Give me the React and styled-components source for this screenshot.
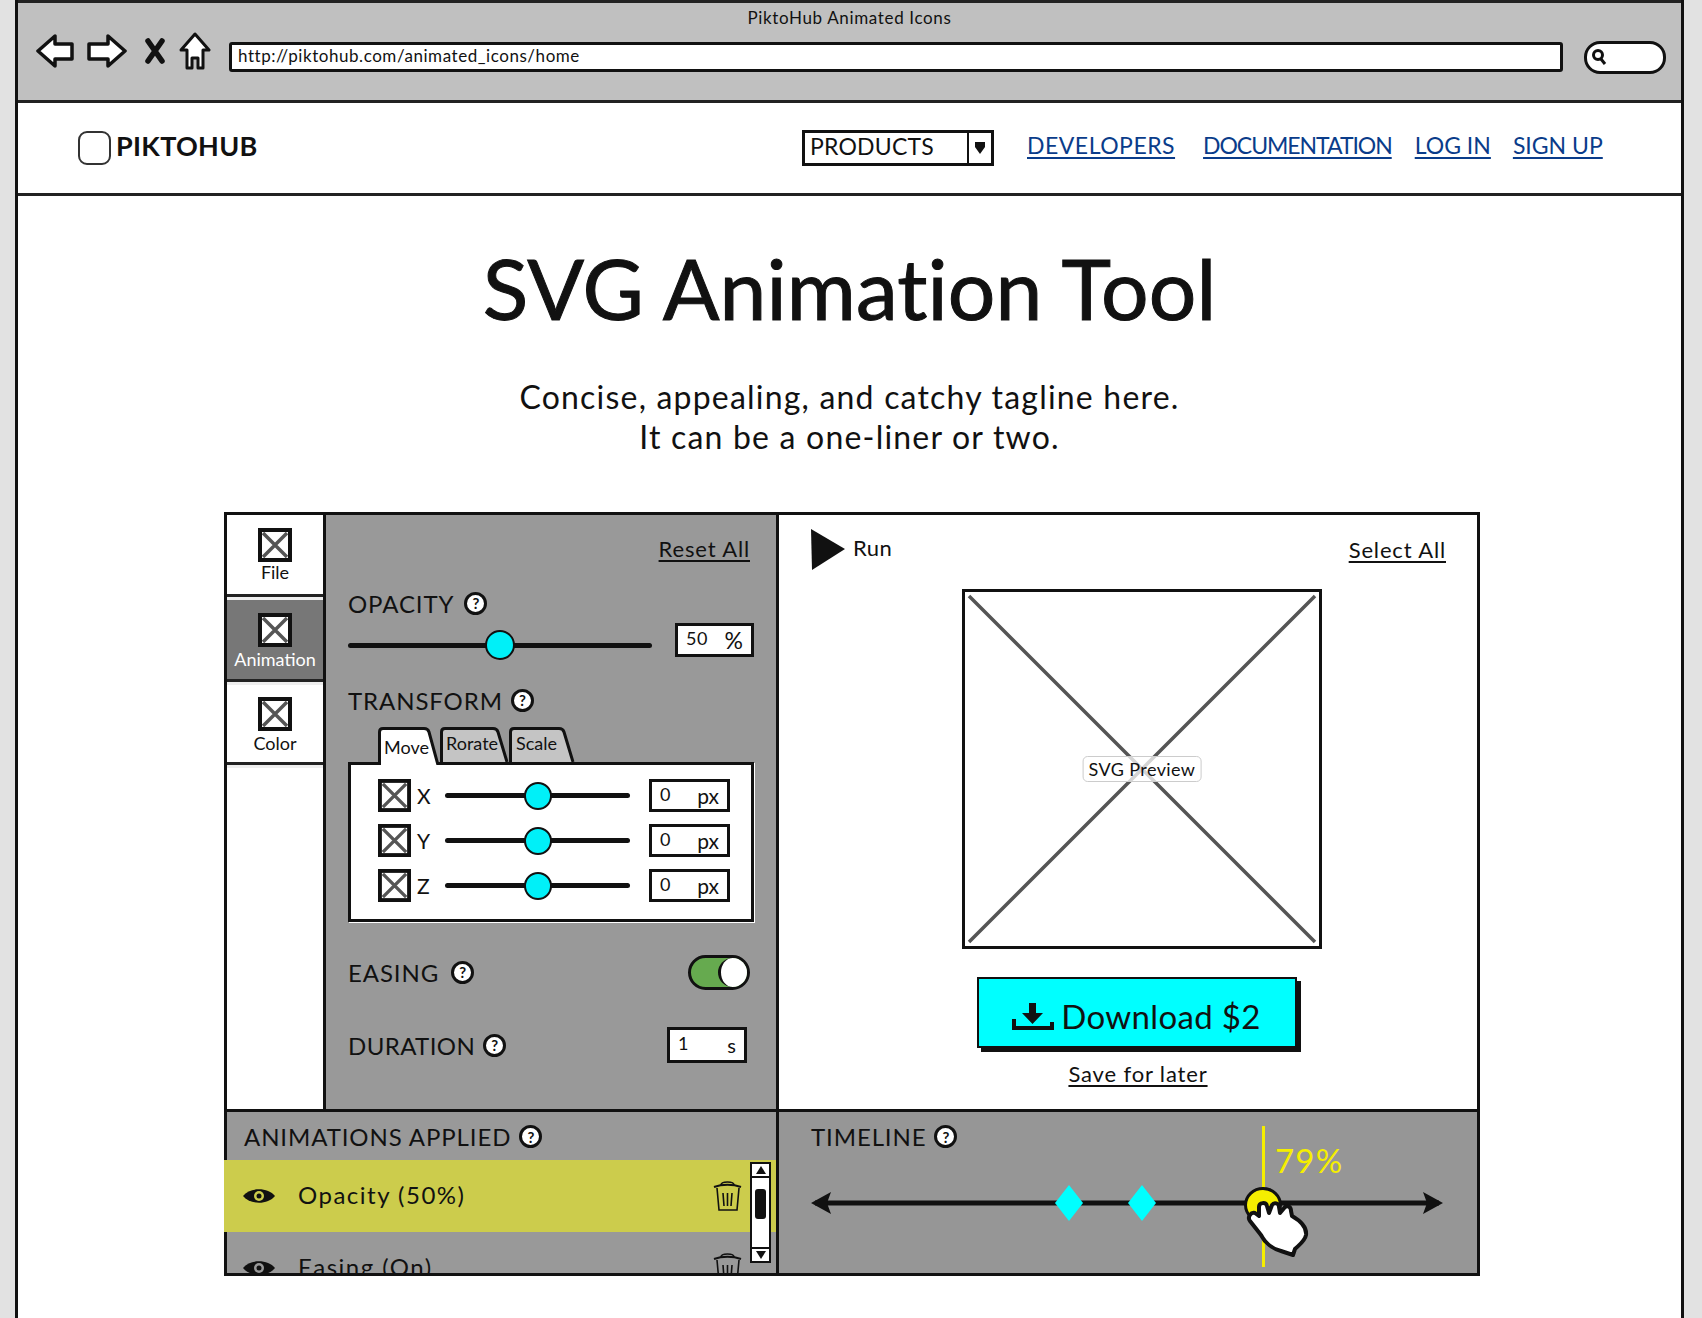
import styled, { createGlobalStyle } from "styled-components"

const GlobalStyle = createGlobalStyle`
    html, body {
        margin: 0;
        padding: 0;
        background: #e2e2e2;
    }
    * {
        box-sizing: border-box;
    }
    body {
        font-family: "Lato", "Noto Sans", sans-serif;
        color: #111;
    }
`

const Page = styled.div`
    width: 1702px;
    height: 1318px;
    overflow: hidden;
    padding-left: 15px;
`

const BrowserWindow = styled.div`
    width: 1669px;
    height: 1318px;
    background: #fff;
    border-left: 3px solid #111;
    border-right: 3px solid #111;
`

const BrowserBar = styled.header`
    height: 103px;
    background: #c0c0c0;
    border-top: 3px solid #222;
    border-bottom: 3px solid #222;
`

const BrowserTitle = styled.div`
    height: 30px;
    line-height: 30px;
    text-align: center;
    font-size: 17px;
    letter-spacing: 0.65px;
`

const BrowserTools = styled.div`
    display: flex;
    align-items: center;
    height: 48px;
    padding-left: 18px;
`

const ToolIcon = styled.svg`
    flex: none;
    margin-right: ${({ $gap }) => $gap}px;
    margin-bottom: 12px;
`

const UrlBar = styled.div`
    flex: none;
    width: 1334px;
    height: 30px;
    margin-right: 21px;
    padding-left: 6px;
    background: #fff;
    border: 3px solid #111;
    border-radius: 3px;
    font-size: 17px;
    line-height: 22px;
    letter-spacing: 0.55px;
`

const SearchPill = styled.div`
    flex: none;
    display: flex;
    align-items: center;
    width: 82px;
    height: 33px;
    padding-left: 4px;
    background: #fff;
    border: 3px solid #111;
    border-radius: 16px;
`

const SiteNav = styled.nav`
    display: flex;
    align-items: center;
    height: 93px;
    padding: 0 0 4px 60px;
    border-bottom: 3px solid #222;
`

const Logo = styled.div`
    display: flex;
    align-items: center;
    gap: 5px;
    width: 724px;
    font-size: 27px;
    line-height: 30px;
    font-weight: 700;
    letter-spacing: 0.3px;
`

const LogoMark = styled.span`
    width: 33px;
    height: 34px;
    margin-top: 4px;
    border: 2px solid #333;
    border-radius: 9px;
`

const ProductSelect = styled.div`
    display: flex;
    width: 192px;
    height: 36px;
    margin: 3px 33px 0 0;
    border: 3px solid #111;
    font-size: 23px;
    line-height: 26px;
`

const SelectLabel = styled.span`
    flex: 1;
    padding-left: 5px;
    letter-spacing: 0.2px;
`

const SelectArrow = styled.span`
    display: flex;
    align-items: center;
    justify-content: center;
    width: 24px;
    border-left: 2px solid #111;
`

const NavLink = styled.a`
    margin-right: ${({ $gap }) => $gap}px;
    color: #0a3c8a;
    font-size: 23px;
    text-decoration: underline;
    text-decoration-thickness: 2px;
    text-underline-offset: 3px;
    letter-spacing: ${({ $spacing }) => $spacing}px;
    position: relative;
    top: -1px;
`

const Hero = styled.section`
    padding-top: 47px;
    text-align: center;
`

const HeroTitle = styled.h1`
    margin: 0;
    font-size: 84px;
    line-height: 90px;
    font-weight: 400;
    -webkit-text-stroke: 1px #111;
    letter-spacing: 0.1px;
`

const Tagline = styled.p`
    margin: 44px 0 0;
    font-size: 32px;
    line-height: 40px;
    letter-spacing: 1.2px;
`

const Tool = styled.section`
    display: grid;
    grid-template-columns: 99px 453px 704px;
    grid-template-rows: 597px 167px;
    width: 1256px;
    margin: 55px 0 0 206px;
`

const Sidebar = styled.aside`
    border: 3px solid #111;
    border-right: 0;
    border-bottom: 0;
    background: #fff;
`

const SideTab = styled.div`
    display: flex;
    flex-direction: column;
    align-items: center;
    height: ${({ $height }) => $height}px;
    margin-bottom: 3px;
    padding-top: ${({ $top }) => $top}px;
    background: ${({ $active }) => ($active ? "#777" : "#fff")};
    color: ${({ $active }) => ($active ? "#fff" : "#111")};
    border-bottom: 3px solid #222;
    box-shadow: 0 3px 0 #eee;
    font-size: 18px;
    line-height: 22px;
`

const SideLabel = styled.span`
    margin-top: ${({ $gap }) => $gap}px;
`

const SideIcon = styled.svg`
    display: block;
    flex: none;
    background: #fff;
`

const OptionsPanel = styled.div`
    padding: 24px 22px 0;
    background: #999;
    border-top: 3px solid #111;
    border-left: 3px solid #111;
`

const SketchLink = styled.a`
    color: inherit;
    font-size: ${({ $size }) => $size || 22}px;
    line-height: 26px;
    text-decoration: underline;
    text-decoration-thickness: 2px;
    text-underline-offset: 3px;
    letter-spacing: 0.85px;
`

const ResetRow = styled.div`
    display: flex;
    justify-content: flex-end;
    height: 26px;
    padding-right: 4px;
    margin-top: -3px;
`

const FieldLabel = styled.div`
    display: flex;
    align-items: center;
    gap: ${({ $gap }) => $gap ?? 8}px;
    height: 30px;
    margin-top: ${({ $top }) => $top}px;
    font-size: 24px;
    letter-spacing: ${({ $spacing }) => $spacing ?? 0.9}px;
`

const Help = styled.span`
    display: inline-flex;
    align-items: center;
    justify-content: center;
    width: 23px;
    height: 23px;
    background: #fff;
    border: 3px solid #111;
    border-radius: 50%;
    font-size: 15px;
    font-weight: 700;
    letter-spacing: 0;
`

const SliderRow = styled.div`
    display: flex;
    align-items: center;
    justify-content: space-between;
    height: 34px;
    margin-top: 5px;
`

const SliderTrack = styled.div`
    position: relative;
    flex: none;
    width: ${({ $width }) => $width}px;
    height: 5px;
    margin-top: ${({ $drop }) => $drop || 0}px;
    background: #111;
    border-radius: 3px;
`

const SliderThumb = styled.span`
    position: absolute;
    top: 50%;
    width: ${({ $size }) => $size}px;
    height: ${({ $size }) => $size}px;
    transform: translate(-50%, -50%);
    background: #00f0f8;
    border: 2px solid #111;
    border-radius: 50%;
`

const ValueBox = styled.div`
    display: flex;
    flex: none;
    align-items: center;
    justify-content: space-between;
    width: ${({ $width }) => $width}px;
    height: ${({ $height }) => $height || 34}px;
    margin-left: ${({ $left }) => $left || 0}px;
    padding: 0 8px;
    background: #fff;
    border: 3px solid #111;
    font-size: 18px;
`

const ValueNumber = styled.span`
    position: relative;
    top: -2px;
    letter-spacing: 0.6px;
`

const ValueUnit = styled.span`
    font-size: ${({ $size }) => $size}px;
`

const TabStrip = styled.div`
    display: flex;
    height: 35px;
    margin-top: 12px;
    padding-left: 30px;
    position: relative;
    z-index: 1;
`

const TransformTab = styled.div`
    position: relative;
    flex: none;
    width: ${({ $width }) => $width}px;
    height: ${({ $active }) => ($active ? 38 : 35)}px;
    padding: ${({ $active }) => ($active ? 9 : 5)}px 0 0 ${({ $pad }) => $pad}px;
    font-size: 18px;
    line-height: 22px;
`

const TabShape = styled.svg`
    position: absolute;
    top: 0;
    left: 0;
`

const TabLabel = styled.span`
    position: relative;
`

const TabBody = styled.div`
    display: flex;
    flex-direction: column;
    gap: 12px;
    height: 160px;
    padding: 14px 21px 0 27px;
    background: #fff;
    border: 3px solid #111;
    box-shadow: 1px 1px 0 #fff;
`

const AxisRow = styled.div`
    display: flex;
    align-items: center;
    height: 33px;
`

const AxisLabel = styled.span`
    flex: none;
    width: 34px;
    padding-left: 6px;
    font-size: 21px;
`

const SwitchRow = styled.div`
    display: flex;
    align-items: center;
    justify-content: space-between;
    height: 36px;
    margin-top: ${({ $top }) => $top}px;
    padding-right: ${({ $right }) => $right}px;
`

const RowLabel = styled(FieldLabel)`
    margin-top: 0;
`

const Toggle = styled.div`
    display: flex;
    justify-content: flex-end;
    width: 62px;
    height: 35px;
    background: #66aa4f;
    border: 3px solid #111;
    border-radius: 18px;
`

const ToggleKnob = styled.span`
    width: 29px;
    height: 29px;
    background: #fff;
    border-left: 3px solid #111;
    border-radius: 50%;
`

const PreviewPanel = styled.div`
    display: flex;
    flex-direction: column;
    background: #fff;
    border-top: 3px solid #111;
    border-left: 3px solid #111;
    border-right: 3px solid #111;
`

const PreviewHead = styled.div`
    display: flex;
    align-items: center;
    height: 41px;
    margin-top: 14px;
    padding: 0 31px 0 32px;
`

const RunLabel = styled.span`
    flex: 1;
    margin-left: 8px;
    font-size: 22px;
    position: relative;
    top: -2px;
    letter-spacing: 0.5px;
`

const PreviewColumn = styled.div`
    display: flex;
    flex-direction: column;
    align-items: center;
    width: 360px;
    margin: 19px 0 0 183px;
`

const PreviewBox = styled.div`
    position: relative;
    width: 360px;
    height: 360px;
    border: 3px solid #111;
`

const PreviewLines = styled.svg`
    display: block;
    width: 100%;
    height: 100%;
`

const PreviewCaption = styled.span`
    position: absolute;
    top: 50%;
    left: 50%;
    transform: translate(-50%, -50%);
    padding: 1px 5px;
    background: rgba(255, 255, 255, 0.75);
    border: 1px solid #ccc;
    border-radius: 5px;
    font-size: 18px;
    line-height: 22px;
    white-space: nowrap;
    letter-spacing: 0.4px;
`

const DownloadButton = styled.div`
    display: flex;
    align-items: center;
    justify-content: center;
    gap: 7px;
    flex: none;
    width: 320px;
    height: 71px;
    margin: 28px 0 0 -11px;
    padding-top: 6px;
    background: #00ffff;
    border: 2px solid #111;
    box-shadow: 4px 4px 0 #111;
    font-size: 33px;
    letter-spacing: 0.35px;
`

const SaveRow = styled.div`
    margin: 13px 0 0 -8px;
    height: 30px;
`

const AppliedPanel = styled.div`
    grid-column: 1 / span 2;
    position: relative;
    overflow: hidden;
    background: #999;
    border-top: 3px solid #111;
    border-bottom: 3px solid #111;
`

const PanelHeading = styled(FieldLabel)`
    margin: 0;
    height: ${({ $height }) => $height}px;
    padding: 1px 0 0 ${({ $left }) => $left}px;
    gap: 8px;
`

const AppliedHeading = styled(PanelHeading)`
    border-left: 3px solid #111;
`

const AppliedRow = styled.div`
    display: flex;
    align-items: center;
    height: 72px;
    padding: 0 34px 0 ${({ $active }) => ($active ? 18 : 15)}px;
    background: ${({ $active }) => ($active ? "#cccc4c" : "transparent")};
    border-left: ${({ $active }) => ($active ? "0" : "3px solid #111")};
    font-size: 24px;
    letter-spacing: 1.5px;
`

const AppliedName = styled.span`
    flex: 1;
    margin: -4px 0 0 22px;
`

const ScrollBar = styled.div`
    position: absolute;
    top: 50px;
    right: 5px;
    display: flex;
    flex-direction: column;
    justify-content: space-between;
    width: 21px;
    height: 101px;
    background: #fff;
    border: 2px solid #111;
`

const ScrollStep = styled.span`
    display: flex;
    align-items: center;
    justify-content: center;
    height: 14px;
    border-${({ $side }) => $side}: 2px solid #111;
`

const ScrollThumb = styled.span`
    width: 11px;
    height: 30px;
    margin: -18px auto 0;
    background: #111;
    border-radius: 3px;
`

const TimelinePanel = styled.div`
    position: relative;
    overflow: hidden;
    background: #969696;
    border: 3px solid #111;
`

const TimelineTrack = styled.div`
    position: absolute;
    top: 91px;
    left: 32px;
    width: 632px;
    height: 0;
`

const TrackArrows = styled.svg`
    position: absolute;
    top: -14px;
    left: 0;
`

const Diamond = styled.span`
    position: absolute;
    top: -18px;
    width: 28px;
    height: 36px;
    margin-left: -14px;
    background: #00ffff;
    clip-path: polygon(50% 0, 100% 50%, 50% 100%, 0 50%);
`

const Playhead = styled.span`
    position: absolute;
    top: 14px;
    left: 483px;
    width: 3px;
    height: 141px;
    background: #f5ee00;
`

const PlayKnob = styled.span`
    position: absolute;
    top: 75px;
    left: 465px;
    width: 38px;
    height: 36px;
    background: #f5ee00;
    border: 3px solid #111;
    border-radius: 50%;
`

const PlayValue = styled.span`
    position: absolute;
    top: 28px;
    left: 496px;
    color: #f5ee00;
    font-size: 33px;
    line-height: 40px;
    letter-spacing: 1.2px;
`

const HandCursor = styled.svg`
    position: absolute;
    top: 87px;
    left: 466px;
`

function XIcon({ size = 34 }) {
    return (
        <SideIcon width={size} height={size} viewBox="0 0 34 34">
            <rect x="2" y="2" width="30" height="30" fill="#fff" stroke="#111" strokeWidth="4" />
            <path d="M5 5 29 29 M29 5 5 29" stroke="#555" strokeWidth="3.5" fill="none" />
        </SideIcon>
    )
}

function Slider({ value, width, size, drop }) {
    return (
        <SliderTrack $width={width} $drop={drop}>
            <SliderThumb $size={size} style={{ left: `${value}%` }} />
        </SliderTrack>
    )
}

function EyeIcon({ pupil }) {
    return (
        <svg width="34" height="20" viewBox="0 0 34 20" style={{ flex: "none" }}>
            <path d="M1 10C8 1 26 1 33 10 26 19 8 19 1 10Z" fill="#111" />
            <circle cx="17" cy="10" r="5" fill={pupil} />
            <circle cx="17" cy="10" r="2.5" fill="#111" />
        </svg>
    )
}

function TrashIcon() {
    return (
        <svg width="29" height="32" viewBox="0 0 29 32" fill="none" stroke="#111" strokeWidth="1.6" style={{ flex: "none" }}>
            <path d="M1 7C9 4 20 4 28 7" strokeWidth="2" />
            <path d="M8 5C8 1 21 1 21 5" />
            <path d="M4 8 6 30H24L26 8" />
            <path d="M10 13 11 26M14.5 13V26M19 13 18 26" />
        </svg>
    )
}

function SketchTab({ label, width, pad, active }) {
    const height = active ? 38 : 35
    const outline = `M1.500 ${height}V5Q1.500 1.500 5 1.500H${width - 16}Q${width - 12} 1.500 ${width - 11} 5L${width - 2} ${height}`
    return (
        <TransformTab $width={width} $pad={pad} $active={active}>
            <TabShape width={width} height={height} viewBox={`0 0 ${width} ${height}`}>
                <path d={outline} fill={active ? "#fff" : "#c4c4c4"} stroke="#111" strokeWidth="3" />
            </TabShape>
            <TabLabel>{label}</TabLabel>
        </TransformTab>
    )
}

const axes = ["X", "Y", "Z"]
const nav = [
    { label: "DEVELOPERS", gap: 28, spacing: 0.5 },
    { label: "DOCUMENTATION", gap: 23, spacing: -1.05 },
    { label: "LOG IN", gap: 22, spacing: 0 },
    { label: "SIGN UP", gap: 0, spacing: 0 },
]

export default function App() {
    return (
        <>
            <GlobalStyle />
            <Page>
                <BrowserWindow>
                    <BrowserBar>
                        <BrowserTitle>PiktoHub Animated Icons</BrowserTitle>
                        <BrowserTools>
                            <ToolIcon $gap={13} width="38" height="36" viewBox="0 0 38 36">
                                <path d="M2 18 19 3V11H36V26H19V33Z" fill="#fff" stroke="#111" strokeWidth="3.5" strokeLinejoin="round" />
                            </ToolIcon>
                            <ToolIcon $gap={17} width="40" height="36" viewBox="0 0 40 36">
                                <path d="M38 18 21 3V11H2V26H21V33Z" fill="#fff" stroke="#111" strokeWidth="3.5" strokeLinejoin="round" />
                            </ToolIcon>
                            <ToolIcon $gap={13} width="22" height="28" viewBox="0 0 22 28">
                                <path d="M4 4 18 24M18 4 4 24" stroke="#111" strokeWidth="5.500" strokeLinecap="round" />
                            </ToolIcon>
                            <ToolIcon $gap={18} width="32" height="38" viewBox="0 0 32 38">
                                <path d="M16 2 30 18H24V36H19V26H13V36H8V18H2Z" fill="#fff" stroke="#111" strokeWidth="3" strokeLinejoin="round" />
                            </ToolIcon>
                            <UrlBar>http://piktohub.com/animated_icons/home</UrlBar>
                            <SearchPill>
                                <svg width="16" height="18" viewBox="0 0 16 18" fill="none" stroke="#111">
                                    <circle cx="7" cy="7" r="4.5" strokeWidth="3" />
                                    <path d="M10 11 14 16" strokeWidth="3" />
                                </svg>
                            </SearchPill>
                        </BrowserTools>
                    </BrowserBar>

                    <SiteNav>
                        <Logo>
                            <LogoMark />
                            PIKTOHUB
                        </Logo>
                        <ProductSelect>
                            <SelectLabel>PRODUCTS</SelectLabel>
                            <SelectArrow>
                                <svg width="12" height="14" viewBox="0 0 12 14">
                                    <path d="M1 1H11V6L6 13 1 6Z" fill="#111" />
                                </svg>
                            </SelectArrow>
                        </ProductSelect>
                        {nav.map((link) => (
                            <NavLink key={link.label} $gap={link.gap} $spacing={link.spacing}>
                                {link.label}
                            </NavLink>
                        ))}
                    </SiteNav>

                    <Hero>
                        <HeroTitle>SVG Animation Tool</HeroTitle>
                        <Tagline>
                            Concise, appealing, and catchy tagline here.
                            <br />
                            It can be a one-liner or two.
                        </Tagline>
                    </Hero>

                    <Tool>
                        <Sidebar>
                            <SideTab $height={82} $top={13}>
                                <XIcon />
                                <SideLabel $gap={-1}>File</SideLabel>
                            </SideTab>
                            <SideTab $height={82} $top={13} $active>
                                <XIcon />
                                <SideLabel $gap={1}>Animation</SideLabel>
                            </SideTab>
                            <SideTab $height={80} $top={12}>
                                <XIcon />
                                <SideLabel $gap={1}>Color</SideLabel>
                            </SideTab>
                        </Sidebar>

                        <OptionsPanel>
                            <ResetRow>
                                <SketchLink>Reset All</SketchLink>
                            </ResetRow>
                            <FieldLabel $top={26} $gap={10}>
                                OPACITY <Help>?</Help>
                            </FieldLabel>
                            <SliderRow>
                                <Slider value={50} width={304} size={30} drop={10} />
                                <ValueBox $width={79}>
                                    <ValueNumber>50</ValueNumber>
                                    <ValueUnit $size={23}>%</ValueUnit>
                                </ValueBox>
                            </SliderRow>
                            <FieldLabel $top={28}>
                                TRANSFORM <Help>?</Help>
                            </FieldLabel>
                            <TabStrip>
                                <SketchTab active label="Move" width={62} pad={6} />
                                <SketchTab label="Rorate" width={69} pad={6} />
                                <SketchTab label="Scale" width={66} pad={7} />
                            </TabStrip>
                            <TabBody>
                                {axes.map((axis) => (
                                    <AxisRow key={axis}>
                                        <XIcon size={33} />
                                        <AxisLabel>{axis}</AxisLabel>
                                        <Slider value={50} width={185} size={28} />
                                        <ValueBox $width={81} $height={33} $left={19}>
                                            <ValueNumber>0</ValueNumber>
                                            <ValueUnit $size={21}>px</ValueUnit>
                                        </ValueBox>
                                    </AxisRow>
                                ))}
                            </TabBody>
                            <SwitchRow $top={32} $right={4}>
                                <RowLabel $gap={12}>
                                    EASING <Help>?</Help>
                                </RowLabel>
                                <Toggle>
                                    <ToggleKnob />
                                </Toggle>
                            </SwitchRow>
                            <SwitchRow $top={37} $right={7}>
                                <RowLabel $spacing={0.4}>
                                    DURATION <Help>?</Help>
                                </RowLabel>
                                <ValueBox $width={80} $height={36}>
                                    <ValueNumber>1</ValueNumber>
                                    <ValueUnit $size={20}>s</ValueUnit>
                                </ValueBox>
                            </SwitchRow>
                        </OptionsPanel>

                        <PreviewPanel>
                            <PreviewHead>
                                <svg width="34" height="41" viewBox="0 0 34 41">
                                    <path d="M0 0 34 20 1 41Z" fill="#111" />
                                </svg>
                                <RunLabel>Run</RunLabel>
                                <SketchLink>Select All</SketchLink>
                            </PreviewHead>
                            <PreviewColumn>
                                <PreviewBox>
                                    <PreviewLines viewBox="0 0 354 354">
                                        <path d="M4 4 350 350M350 4 4 350" stroke="#555" strokeWidth="3.500" fill="none" />
                                    </PreviewLines>
                                    <PreviewCaption>SVG Preview</PreviewCaption>
                                </PreviewBox>
                                <DownloadButton>
                                    <svg width="42" height="30" viewBox="0 0 42 30" fill="#111">
                                        <path d="M17 2H24V12H31L20.500 23 10 12H17Z" />
                                        <path d="M2 18V27H40V21" fill="none" stroke="#111" strokeWidth="4" />
                                    </svg>
                                    Download $2
                                </DownloadButton>
                                <SaveRow>
                                    <SketchLink>Save for later</SketchLink>
                                </SaveRow>
                            </PreviewColumn>
                        </PreviewPanel>

                        <AppliedPanel>
                            <AppliedHeading $left={17} $height={48}>
                                ANIMATIONS APPLIED <Help>?</Help>
                            </AppliedHeading>
                            <AppliedRow $active>
                                <EyeIcon pupil="#cccc4c" />
                                <AppliedName>Opacity (50%)</AppliedName>
                                <TrashIcon />
                            </AppliedRow>
                            <AppliedRow>
                                <EyeIcon pupil="#999" />
                                <AppliedName>Easing (On)</AppliedName>
                                <TrashIcon />
                            </AppliedRow>
                            <ScrollBar>
                                <ScrollStep $side="bottom">
                                    <svg width="10" height="8" viewBox="0 0 10 8">
                                        <path d="M5 0 10 8H0Z" fill="#111" />
                                    </svg>
                                </ScrollStep>
                                <ScrollThumb />
                                <ScrollStep $side="top">
                                    <svg width="10" height="8" viewBox="0 0 10 8">
                                        <path d="M5 8 10 0H0Z" fill="#111" />
                                    </svg>
                                </ScrollStep>
                            </ScrollBar>
                        </AppliedPanel>

                        <TimelinePanel>
                            <PanelHeading $left={32} $height={48}>
                                TIMELINE <Help>?</Help>
                            </PanelHeading>
                            <TimelineTrack>
                                <TrackArrows width="632" height="28" viewBox="0 0 632 28">
                                    <path d="M4 14H628" stroke="#111" strokeWidth="5" />
                                    <path d="M0 14 20 3 16 14 20 25ZM632 14 612 3 616 14 612 25Z" fill="#111" />
                                </TrackArrows>
                                <Diamond style={{ left: 258 }} />
                                <Diamond style={{ left: 331 }} />
                            </TimelineTrack>
                            <Playhead />
                            <PlayValue>79%</PlayValue>
                            <PlayKnob />
                            <HandCursor width="64" height="58" viewBox="0 0 64 58">
                                <path
                                    d="M5 22C2 18 6 13 10 14L14 17 14 8C14 3 21 3 22 7L24 14 27 6C29 3 34 4 34 8L35 14 40 8C43 6 46 8 46 12L47 17C54 21 62 28 61 36 60 42 54 46 50 50L48 56 36 52C28 50 20 44 16 36Z"
                                    fill="#fff"
                                    stroke="#111"
                                    strokeWidth="4"
                                    strokeLinejoin="round"
                                />
                            </HandCursor>
                        </TimelinePanel>
                    </Tool>
                </BrowserWindow>
            </Page>
        </>
    )
}
